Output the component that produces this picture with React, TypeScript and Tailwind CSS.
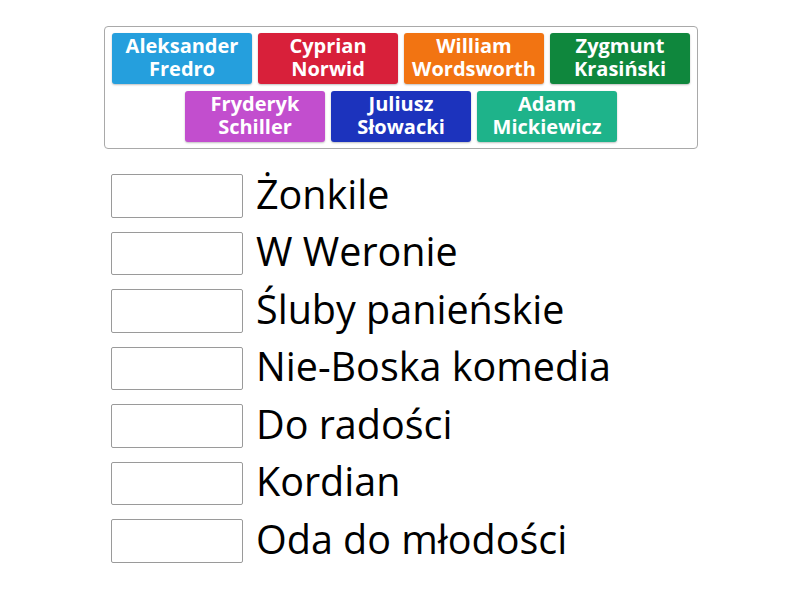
const tilesTop = [
  { name: 'Aleksander\nFredro', bg: 'bg-[#259fdd]' },
  { name: 'Cyprian\nNorwid', bg: 'bg-[#d8203a]' },
  { name: 'William\nWordsworth', bg: 'bg-[#f27412]' },
  { name: 'Zygmunt\nKrasiński', bg: 'bg-[#0f873d]' },
];

const tilesBottom = [
  { name: 'Fryderyk\nSchiller', bg: 'bg-[#c24ece]' },
  { name: 'Juliusz\nSłowacki', bg: 'bg-[#1c33bd]' },
  { name: 'Adam\nMickiewicz', bg: 'bg-[#1eb38a]' },
];

const titles = [
  'Żonkile',
  'W Weronie',
  'Śluby panieńskie',
  'Nie-Boska komedia',
  'Do radości',
  'Kordian',
  'Oda do młodości',
];

function Tile({ name, bg }: { name: string; bg: string }) {
  const [a, b] = name.split('\n');
  return (
    <div
      className={`${bg} w-[140px] h-[51px] pb-[3px] rounded-[3px] flex items-center justify-center text-center text-white font-bold text-[20px] leading-[23px] shadow-[0_1px_2px_rgba(0,0,0,0.25)]`}
    >
      <div>
        {a}
        <br />
        {b}
      </div>
    </div>
  );
}

export default function App() {
  return (
    <div className="w-[800px] h-[600px] bg-white" style={{ fontFamily: '"Open Sans", "Noto Sans", sans-serif' }}>
      <div className="pt-[26px] pl-[104px]">
        <div className="w-[594px] h-[123px] border border-[#a9a9a9] rounded-[4px] flex flex-col items-center pt-[6px] gap-[7px]">
          <div className="flex gap-[6px]">
            {tilesTop.map((t) => (
              <Tile key={t.name} {...t} />
            ))}
          </div>
          <div className="flex gap-[6px]">
            {tilesBottom.map((t) => (
              <Tile key={t.name} {...t} />
            ))}
          </div>
        </div>
      </div>
      <div className="pl-[111px] pt-[25px] flex flex-col gap-[14px]">
        {titles.map((t) => (
          <div key={t} className="flex items-center h-[43.5px]">
            <div className="w-[132px] h-[43.5px] border border-[#9a9a9a] rounded-[2px] bg-white shrink-0" />
            <span className="ml-[13px] pb-[3px] text-[39.5px] leading-none text-black whitespace-nowrap">{t}</span>
          </div>
        ))}
      </div>
    </div>
  );
}
